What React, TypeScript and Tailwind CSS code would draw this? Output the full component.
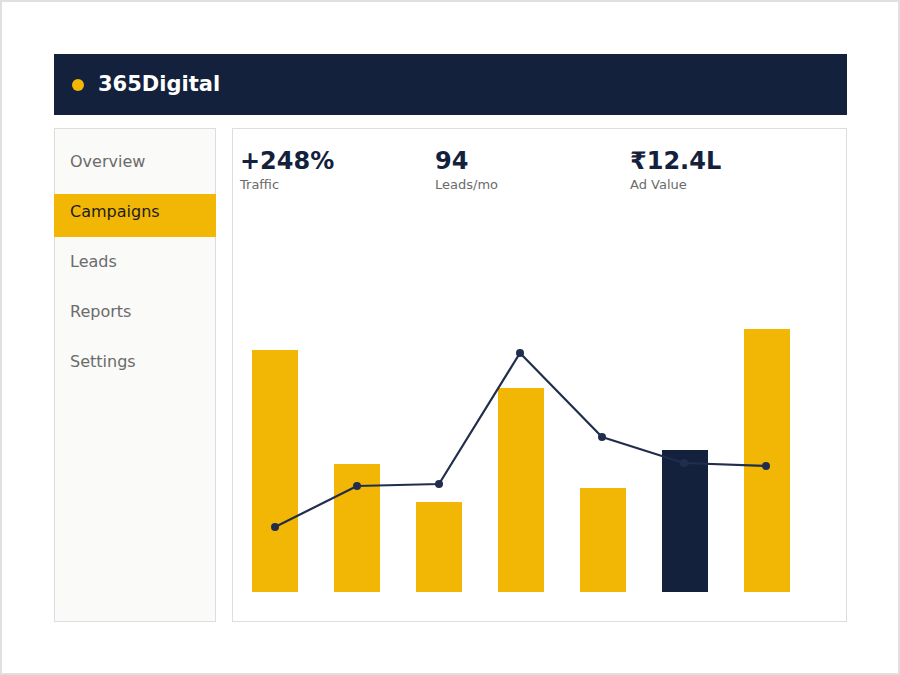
const navItems = ["Overview", "Campaigns", "Leads", "Reports", "Settings"]

const stats = [
  { value: "+248%", label: "Traffic" },
  { value: "94", label: "Leads/mo" },
  { value: "₹12.4L", label: "Ad Value" },
]

// chart coords are relative to the svg (panel inner left = 233, svg top = 200)
const bars = [
  { x: 19, top: 350, dark: false },
  { x: 101, top: 464, dark: false },
  { x: 183, top: 502, dark: false },
  { x: 265, top: 388, dark: false },
  { x: 347, top: 488, dark: false },
  { x: 429, top: 450, dark: true },
  { x: 511, top: 329, dark: false },
]

const points: [number, number][] = [
  [275, 527],
  [357, 486],
  [439, 484],
  [520, 353],
  [602, 437],
  [684, 463],
  [766, 466],
]

function Chart() {
  const baseY = 592 - 200
  return (
    <svg width="613" height="421" viewBox="0 0 613 421" className="mt-auto block">
      {bars.map((b, i) => (
        <rect
          key={i}
          x={b.x}
          y={b.top - 200}
          width={46}
          height={baseY - (b.top - 200)}
          fill={b.dark ? "#14213d" : "#f2b705"}
        />
      ))}
      <polyline
        points={points.map(([x, y]) => `${x - 233},${y - 200}`).join(" ")}
        fill="none"
        stroke="#212d4d"
        strokeWidth="2.2"
        strokeLinejoin="round"
      />
      {points.map(([x, y], i) => (
        <circle key={i} cx={x - 233} cy={y - 200} r="4" fill="#212d4d" />
      ))}
    </svg>
  )
}

export default function App() {
  return (
    <div
      className="w-[900px] h-[675px] border-2 border-[#e0e0e0] bg-white pl-[52px] pt-[52px]"
      style={{ fontFamily: '"DejaVu Sans", sans-serif' }}
    >
      <div className="w-[793px]">
        {/* Top bar */}
        <header className="h-[61px] bg-[#14213d] flex items-center pl-[18px]">
          <span className="w-[12px] h-[12px] rounded-full bg-[#f2b705]" />
          <span className="ml-[14px] text-white font-bold text-[21px] leading-none">365Digital</span>
        </header>

        <div className="mt-[13px] flex gap-4 h-[494px]">
          {/* Sidebar */}
          <nav className="w-[162px] border border-[#dddddd] bg-[#fafaf8] pt-[15px] flex flex-col gap-[7px]">
            {navItems.map((item) => {
              const active = item === "Campaigns"
              return (
                <div
                  key={item}
                  className={
                    active
                      ? "h-[43px] -mx-px bg-[#f2b705] pt-[6px] pl-[16px] text-[16px] text-[#1c1c1c]"
                      : "h-[43px] pt-[6px] pl-[15px] text-[16px] text-[#6b6b6b]"
                  }
                >
                  {item}
                </div>
              )
            })}
          </nav>

          {/* Main panel */}
          <main className="w-[615px] border border-[#dddddd] bg-white flex flex-col">
            <div className="flex pt-[18px] pl-[7px]">
              {stats.map((s) => (
                <div key={s.label} className="w-[195px]">
                  <div className="text-[24px] leading-[28px] font-bold text-[#14213d]">{s.value}</div>
                  <div className="text-[13px] text-[#6b6b6b]">{s.label}</div>
                </div>
              ))}
            </div>
            <Chart />
          </main>
        </div>
      </div>
    </div>
  )
}
